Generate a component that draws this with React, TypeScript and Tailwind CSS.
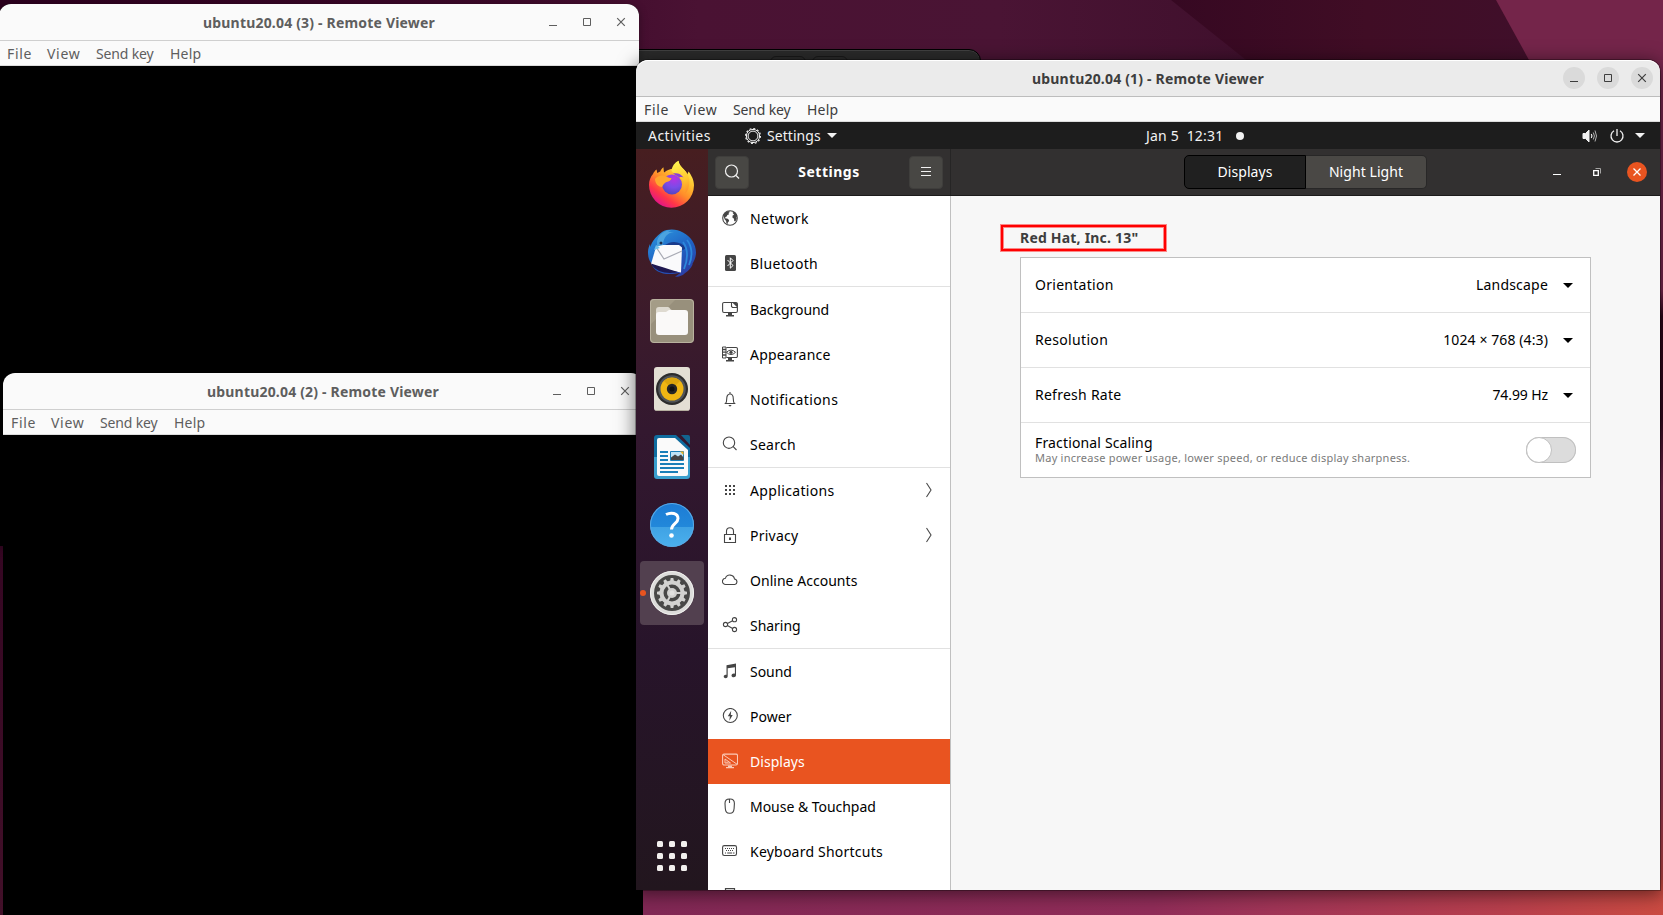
import type { ReactNode } from "react";

const FONT = "font-['Noto_Sans','Open_Sans',sans-serif]";

function Wallpaper() {
  return (
    <svg className="absolute inset-0" width="1663" height="915" viewBox="0 0 1663 915">
      <defs>
        <linearGradient id="wallTop" x1="0" x2="1" y1="0" y2="0">
          <stop offset="0" stopColor="#2c001e" />
          <stop offset="0.3" stopColor="#3c0829" />
          <stop offset="0.42" stopColor="#4a1233" />
          <stop offset="0.6" stopColor="#4a1434" />
          <stop offset="0.75" stopColor="#40102d" />
        </linearGradient>
        <linearGradient id="wallBottom" gradientUnits="userSpaceOnUse" x1="643" x2="1663" y1="0" y2="0">
          <stop offset="0" stopColor="#822855" />
          <stop offset="0.5" stopColor="#912d59" />
          <stop offset="0.62" stopColor="#a13557" />
          <stop offset="0.84" stopColor="#b83f4d" />
          <stop offset="1" stopColor="#cb4b42" />
        </linearGradient>
        <linearGradient id="wallLeft" x1="0" x2="0" y1="0" y2="1">
          <stop offset="0" stopColor="#2c001e" />
          <stop offset="1" stopColor="#421029" />
        </linearGradient>
        <linearGradient id="wallDark" gradientUnits="userSpaceOnUse" x1="1168" x2="1529" y1="0" y2="0">
          <stop offset="0" stopColor="#360822" />
          <stop offset="0.55" stopColor="#400d25" />
          <stop offset="1" stopColor="#400f2a" />
        </linearGradient>
        <linearGradient id="wallRight" x1="0" x2="0" y1="0" y2="1">
          <stop offset="0" stopColor="#7b2950" />
          <stop offset="0.27" stopColor="#7b2950" />
          <stop offset="0.3" stopColor="#2d0719" />
          <stop offset="0.42" stopColor="#35091f" />
          <stop offset="0.5" stopColor="#7b2950" />
          <stop offset="0.85" stopColor="#a03a55" />
          <stop offset="1" stopColor="#cb4b42" />
        </linearGradient>
      </defs>
      <rect width="1663" height="300" fill="url(#wallTop)" />
      <rect y="300" width="10" height="615" fill="url(#wallLeft)" />
      <path d="M1171 0H1663V200H1421z" fill="url(#wallDark)" />
      <path d="M1496 0H1663V300H1661z" fill="#74254a" />
      <rect x="1655" width="8" y="60" height="855" fill="url(#wallRight)" />
      <rect x="640" y="880" width="1023" height="35" fill="url(#wallBottom)" />
    </svg>
  );
}

function WindowButton({ active, children }: { active: boolean; children: ReactNode }) {
  return (
    <div className={`flex size-[22px] items-center justify-center rounded-full ${active ? "bg-[#dadada] text-[#3d3d3d]" : "text-[#5e5e5e]"}`}>
      <svg width="10" height="10" viewBox="0 0 10 10" fill="none" stroke="currentColor">
        {children}
      </svg>
    </div>
  );
}

function TitleBar({ title, active }: { title: string; active: boolean }) {
  return (
    <div
      className={`relative flex h-[37px] shrink-0 items-center justify-end gap-3 rounded-t-xl border-b pr-[7px] ${
        active ? "border-[#bdbdbd] bg-[#ebebeb] text-[#3d3d3d] shadow-[inset_0_1px_0_#fff]" : "border-[#cfcfcf] bg-[#fafafa] text-[#5e5e5e]"
      }`}
    >
      <div className="absolute inset-x-0 top-[9px] text-center text-[14px] leading-[19px] font-bold tracking-[0.19px]">{title}</div>
      <WindowButton active={active}>
        <path d="M1 8.5h8" />
      </WindowButton>
      <WindowButton active={active}>
        <path d="M1.5 1.5h7v7h-7z" />
      </WindowButton>
      <WindowButton active={active}>
        <path d="M1.2 1.2l7.6 7.6M8.8 1.2L1.2 8.8" strokeWidth="1.2" />
      </WindowButton>
    </div>
  );
}

function MenuBar({ active }: { active: boolean }) {
  return (
    <div className={`flex h-[25px] shrink-0 items-center border-b border-[#dcdcdc] bg-[#fafafa] pl-2 text-[14px] leading-[19px] ${active ? "text-[#3d3d3d]" : "text-[#5e5e5e]"}`}>
      <span className="w-[40px] tracking-[0.7px]">File</span>
      <span className="w-[49px] tracking-[0.7px]">View</span>
      <span className="w-[74px] whitespace-nowrap tracking-[-0.15px]">Send key</span>
      <span className="tracking-[0.2px]">Help</span>
    </div>
  );
}

const S = { fill: "none", stroke: "currentColor" } as const;

const icons: Record<string, ReactNode> = {
  network: (
    <>
      <circle cx="8" cy="8" r="7.3" {...S} strokeWidth="1.1" />
      <path d="M1.600 4.800C2.800 2.600 4.800 1.200 7.200.9l.6 1.200-1.300.8.6 1.300-1.700.8-1 1.700-1.200.4.300 1.300 1.700.1 1.900 1.500-.3 1.500-1 1.100-.3 1.700-1.100-1-.3-2.300-1.500-1.700-.7-2zM10.500 2.700l1.700-1c1.700 1 2.700 2.500 3.100 4.300l-.9 1.200.4 1.600-1.500 2.700-1.100-.5-.2-2.300-1.600-1.100.2-2.200 1.500-.7z" />
    </>
  ),
  bluetooth: (
    <>
      <rect x="3" y="0" width="11" height="16" rx="1.500" />
      <path d="M5.500 5l5.500 5.500-2.700 2.700V2.800L11 5.500 5.500 11" fill="none" stroke="#fff" strokeWidth="1" />
    </>
  ),
  background: (
    <>
      <path d="M9.500 1.500H2a1.400 1.400 0 0 0-1.400 1.400v7.200A1.400 1.400 0 0 0 2 11.500h12a1.400 1.400 0 0 0 1.400-1.400V2.900A1.400 1.400 0 0 0 14 1.500H9.500v4l1 1h4.700" {...S} strokeWidth="1.1" />
      <path d="M10 1.200h4L15.500 3v3.500zM6 12h4v2h2v1.500H4V14h2z" />
    </>
  ),
  appearance: (
    <>
      <path d="M4.500 1.500H14.200a1.200 1.200 0 0 1 1.200 1.200v7.600a1.200 1.200 0 0 1-1.200 1.200H4.500" {...S} strokeWidth="1.1" />
      <path d="M4.500 6.300Q9 1.800 13.500 6.300Q9 10.800 4.500 6.300z" {...S} strokeWidth="1" />
      <circle cx="9" cy="6.300" r="1.600" />
      <path d="M.5 1h3.500v11H.5z" {...S} />
      <path d="M.5 3.500h3.500M.5 6.200h3.500M.5 9h3.500" {...S} strokeWidth="1.300" />
      <path d="M6 12h4v2h2v1.500H4V14h2z" />
    </>
  ),
  notifications: (
    <>
      <path d="M3.500 12.500c1-1 1.200-2 1.200-4.500 0-3 1-5 3.300-5s3.300 2 3.300 5c0 2.500.2 3.500 1.200 4.500zM8 1v2" {...S} strokeWidth="1.1" />
      <path d="M6.300 14h3.400L8 15.700z" />
    </>
  ),
  search: <path d="M7 1a5.700 5.700 0 1 1 0 11.400A5.700 5.700 0 0 1 7 1zM11.200 10.700l3.300 3.300" {...S} strokeWidth="1.1" />,
  applications: <path d="M3 3h2v2H3zM7 3h2v2H7zM11 3h2v2h-2zM3 7h2v2H3zM7 7h2v2H7zM11 7h2v2h-2zM3 11h2v2H3zM7 11h2v2H7zM11 11h2v2h-2z" />,
  privacy: (
    <>
      <path d="M2.500 7.500h11v8h-11zM4.500 7.500V4.200a3.500 3.500 0 0 1 7 0v3.300" {...S} strokeWidth="1.1" />
      <path d="M7 10.500h2v2.500H7z" />
    </>
  ),
  cloud: <path d="M3.700 12.500a3.100 3.100 0 0 1-.3-6.200A4.700 4.700 0 0 1 12.500 7a2.800 2.800 0 0 1 .3 5.500z" {...S} strokeWidth="1.1" />,
  sharing: (
    <g {...S} strokeWidth="1.1">
      <circle cx="3.500" cy="7.500" r="2.100" />
      <circle cx="12.500" cy="2.700" r="2.100" />
      <circle cx="12.500" cy="12.500" r="2.100" />
      <path d="M5.400 6.500l5.200-2.800M5.400 8.500l5.200 3" />
    </g>
  ),
  sound: (
    <path d="M4.500 2.300L14 .5v11.700c0 1.200-1 2-2.300 2S9.500 13.500 9.500 12.400s1.100-1.900 2.300-1.900c.4 0 .8.1 1.100.3V4.300l-7.200 1v7.900c0 1.200-1 2-2 2s-2-.7-2-1.700 1-1.800 2-1.800c.3 0 .6 0 .8.1z" />
  ),
  power: (
    <>
      <circle cx="8.300" cy="7.500" r="7" {...S} strokeWidth="1.1" />
      <path d="M9.200 2.700L5.800 8.200h2.100L7.300 12.700l3.400-5.700H8.800z" />
    </>
  ),
  displays: (
    <>
      <rect x="0.600" y="1.100" width="14.900" height="10.900" rx="1.500" {...S} strokeWidth="1.1" />
      <path d="M1 1.600l14 9.600M3 6v4h5.500zM5 8.500v1.400" {...S} />
      <path d="M6 12.500h4V14h2v1.200H4V14h2z" />
    </>
  ),
  mouse: <path d="M7.300 1h.8c3 0 4.300 1.800 4.300 4.500l-.3 5c-.2 3-1.700 4.700-4 4.700h-.8c-2.300 0-3.800-1.700-4-4.700l-.3-5C3 2.800 4.300 1 7.300 1zM7.500 1v4" {...S} strokeWidth="1.1" />,
  keyboard: (
    <>
      <rect x="0.600" y="2.600" width="13.900" height="9.900" rx="1.700" {...S} strokeWidth="1.1" />
      <path d="M3 5.500h10M4 7.500h8" {...S} strokeDasharray="1 1" />
      <path d="M3 10h1M5.200 10h5M11 10h1.500" {...S} />
    </>
  ),
  printer: <path d="M3.500 16V.600h9V16" {...S} strokeWidth="1.200" />,
};

type Item = { icon: string; label: string; track: string; chevron?: boolean; active?: boolean };

const groups: Item[][] = [
  [
    { icon: "network", label: "Network", track: "tracking-[0.36px]" },
    { icon: "bluetooth", label: "Bluetooth", track: "tracking-[0.35px]" },
  ],
  [
    { icon: "background", label: "Background", track: "tracking-[-0.05px]" },
    { icon: "appearance", label: "Appearance", track: "tracking-[0.2px]" },
    { icon: "notifications", label: "Notifications", track: "tracking-[0.38px]" },
    { icon: "search", label: "Search", track: "tracking-[0.25px]" },
  ],
  [
    { icon: "applications", label: "Applications", track: "tracking-[0.35px]", chevron: true },
    { icon: "privacy", label: "Privacy", track: "tracking-[0.24px]", chevron: true },
    { icon: "cloud", label: "Online Accounts", track: "tracking-[0.03px]" },
    { icon: "sharing", label: "Sharing", track: "tracking-[-0.04px]" },
  ],
  [
    { icon: "sound", label: "Sound", track: "tracking-[-0.05px]" },
    { icon: "power", label: "Power", track: "tracking-[0.05px]" },
    { icon: "displays", label: "Displays", track: "tracking-[0.04px]", active: true },
    { icon: "mouse", label: "Mouse & Touchpad", track: "tracking-[-0.03px]" },
    { icon: "keyboard", label: "Keyboard Shortcuts", track: "tracking-[0.22px]" },
    { icon: "printer", label: "", track: "" },
  ],
];

function SidebarRow({ item }: { item: Item }) {
  return (
    <div className={`flex h-[45px] shrink-0 items-start pt-[14px] pr-[17px] pl-[14px] ${item.active ? "bg-[#e95420] text-white" : "text-black"}`}>
      <svg width="16" height="16" viewBox="0 0 16 16" fill="currentColor" className={item.active ? "text-[#fbc9b6]" : "text-[#454545]"}>
        {icons[item.icon]}
      </svg>
      <span className={`-mt-px ml-3 flex-1 text-[14px] leading-[19px] whitespace-nowrap ${item.track}`}>{item.label}</span>
      {item.chevron && (
        <svg width="8" height="16" viewBox="0 0 8 16" fill="none" stroke="#4a4a4a" strokeWidth="1.1">
          <path d="M1.500 1l4.500 7-4.500 7" />
        </svg>
      )}
    </div>
  );
}

function Firefox() {
  return (
    <svg width="48" height="48" viewBox="0 0 48 48" className="-mt-[3px]">
      <defs>
        <linearGradient id="ffBody" x1="0.85" y1="0.1" x2="0.25" y2="0.95">
          <stop offset="0" stopColor="#fff44f" />
          <stop offset="0.3" stopColor="#ffbd2e" />
          <stop offset="0.55" stopColor="#ff8a2a" />
          <stop offset="0.8" stopColor="#ff3647" />
          <stop offset="1" stopColor="#e31587" />
        </linearGradient>
        <radialGradient id="ffGlobe" cx="0.6" cy="0.2" r="0.9">
          <stop offset="0" stopColor="#b833e1" />
          <stop offset="0.5" stopColor="#7a4be8" />
          <stop offset="1" stopColor="#4a43b5" />
        </radialGradient>
        <linearGradient id="ffTail" x1="0.4" y1="0" x2="0.6" y2="1">
          <stop offset="0" stopColor="#fff44f" />
          <stop offset="0.6" stopColor="#ffc62f" />
          <stop offset="1" stopColor="#ff8f2a" />
        </linearGradient>
      </defs>
      <path d="M5 14c1-2 2-3.500 3.600-4.500l.6 3.500 3-1.500c.8-2 1.500-3 3.200-4.300l.6 5.300c4-3 7-4 10-3.700 1.300-4 2.500-6 4.500-8 .5 4 2.800 6 5.500 8.700 1.500 1.500 2.500 3 3.200 5l1.400-3c2.500 3.500 5.400 8 5.400 13.800A22.500 22.500 0 0 1 1 25c0-4.500 1.500-8 4-11z" fill="url(#ffBody)" />
      <path d="M23.500 11c.5-5 3.500-8.500 7-10.200.5 4 2.800 6.200 5.500 8.900 7 6 7 18 1 24.300 1-5 0-11-3-15S26 14 23.500 11z" fill="url(#ffTail)" />
      <circle cx="24" cy="24.500" r="10" fill="url(#ffGlobe)" />
      <path d="M7 19c2-2.500 5-4 8.500-3.500 2.500.3 4 2.500 8 2.500-.3 2.500-2.500 3.200-5 4-2 .7-2.800 2-4.500 5-3 0-7-3-7-8z" fill="#ffa72e" />
      <path d="M25 13.500c4-1 8 0 10.500 4-2-.6-3-.6-4 0z" fill="#8a3fd6" />
    </svg>
  );
}

function Thunderbird() {
  return (
    <svg width="50" height="50" viewBox="0 0 50 50">
      <defs>
        <linearGradient id="tbBody" x1="0.2" y1="0" x2="0.8" y2="1">
          <stop offset="0" stopColor="#2b93dc" />
          <stop offset="0.5" stopColor="#1f62c4" />
          <stop offset="1" stopColor="#2d3aa0" />
        </linearGradient>
      </defs>
      <path d="M15 4c6-3.500 15-3 21 .5 8 4 13 12 13 20 0 5-2 9-4 12l1-1c-2 6-7 9-10 11l2-1c-3 2.500-7 3.500-10 3.300l6-4.300C20 48 8 46 4 35 2 32 1 29 1 24c0-3 1-6 2-8l.5 3C5 13 9 9 12 6.500z" fill="url(#tbBody)" />
      <path d="M10 13c2-7 8-11 14-11l-3 2h6c-7 1-10 5-11 12-1 4-3 6-6 7z" fill="#4ba3df" />
      <path d="M17 18c7-6 16-5 22 2l-3 2z" fill="#183a8c" />
      <path d="M9 19l7-2h16l3 2.500-1 25C23 43 13 40 4 36z" fill="#fafafc" />
      <path d="M9 19l8 12 18-8" fill="none" stroke="#a9abb5" strokeWidth="1.200" />
      <path d="M4 35.500c8 2.500 17 5.500 27 8.500-8 2-22 1.500-27-8.500z" fill="#1f1850" />
      <path d="M40 12c5 6 6 16 2 25M36 14c5 7 5 17 1 27" fill="none" stroke="#2d88dc" strokeWidth="1.800" />
      <circle cx="14" cy="15" r="1.500" fill="#1b2b4f" />
      <path d="M9 17l-2 5 6-2z" fill="#6fc0ea" />
    </svg>
  );
}

function Files() {
  return (
    <svg width="46" height="46" viewBox="0 0 46 46">
      <rect x="1" y="1" width="44" height="44" rx="4" fill="#98907c" />
      <path d="M5 1h22L1 27V5a4 4 0 0 1 4-4z" fill="#a49c87" />
      <rect x="1.500" y="1.500" width="43" height="43" rx="3.500" fill="none" stroke="#b9b29f" />
      <path d="M7 12a3 3 0 0 1 3-3h9c2 0 2 3 4 3h13v6H7z" fill="#dedad0" />
      <path d="M7 17a3 3 0 0 1 3-3h7l3-2h16a3 3 0 0 1 3 3v19a3 3 0 0 1-3 3H10a3 3 0 0 1-3-3z" fill="#faf9f8" />
    </svg>
  );
}

function Speaker() {
  return (
    <svg width="46" height="46" viewBox="0 0 46 46">
      <rect x="5" y="1" width="36" height="44" rx="3" fill="#e3dfd4" />
      <path d="M7 44.500h32" stroke="#b5ae9f" />
      <circle cx="23" cy="23" r="16" fill="#2c2c2c" />
      <circle cx="23" cy="23" r="13.800" fill="#505458" />
      <circle cx="23" cy="23" r="11.500" fill="#f0b613" />
      <path d="M15 15a11.500 11.500 0 0 1 16 0l-8 8z" fill="#dca50c" />
      <circle cx="23" cy="23" r="5.200" fill="#262626" />
      <circle cx="23" cy="23" r="2.500" fill="#111" />
    </svg>
  );
}

function Writer() {
  return (
    <svg width="46" height="46" viewBox="0 0 46 46">
      <path d="M5 4a3 3 0 0 1 3-3h19l14 13v9H5z" fill="#0f6c9f" />
      <path d="M5 23h36v19a3 3 0 0 1-3 3H8a3 3 0 0 1-3-3z" fill="#3a9fcd" />
      <path d="M32 1h7a2 2 0 0 1 2 2v8z" fill="#12648f" />
      <path d="M8 6a2 2 0 0 1 2-2h16l13 12v24a2 2 0 0 1-2 2H10a2 2 0 0 1-2-2z" fill="#fafafa" />
      <path d="M11 18h8M11 22h8M11 26h8M11 30h24M11 34h24M11 38h18" stroke="#1a7fb8" strokeWidth="2" />
      <path d="M21.500 17.500h13v9h-13z" fill="#bfe3f5" stroke="#1a7fb8" />
      <path d="M22 26v-2.500l4-3 3 2 3-2 2.500 3V26z" fill="#444" />
      <path d="M31 17.500h3.500V21z" fill="#f3b61f" />
    </svg>
  );
}

function Help() {
  return (
    <div className="flex size-[44px] items-center justify-center rounded-full bg-[linear-gradient(#1c7cd5_0%,#2288da_54%,#3fa2e4_54%,#4bb0ee_100%)] shadow-[inset_0_0_0_1px_#59a9e5]">
      <svg width="20" height="30" viewBox="0 0 20 30">
        <path d="M4 4.500c5-2.500 12-1.500 12 4 0 5-6.500 5.500-6.500 11" fill="none" stroke="#fff" strokeWidth="3" />
        <circle cx="9.500" cy="25.500" r="2.300" fill="#fff" />
      </svg>
    </div>
  );
}

const TEETH = [0, 30, 60, 90, 120, 150, 180, 210, 240, 270, 300, 330];

function SettingsGear() {
  return (
    <svg width="46" height="46" viewBox="0 0 46 46">
      <circle cx="23" cy="23" r="22" fill="#dcdcda" />
      <circle cx="23" cy="23" r="21.500" fill="none" stroke="#f1f1ef" />
      <circle cx="23" cy="23" r="18" fill="#484847" />
      <circle cx="23" cy="23" r="10.500" fill="none" stroke="#d2d2d0" strokeWidth="4" />
      {TEETH.map((a) => (
        <path key={a} d="M21 11.500l.7-3.500h2.600l.7 3.500z" fill="#d2d2d0" transform={`rotate(${a} 23 23)`} />
      ))}
      <circle cx="23" cy="23" r="5" fill="#d2d2d0" />
      <path d="M23 23h10M23 23l-5-8.700M23 23l-5 8.700" stroke="#d2d2d0" strokeWidth="2" />
      <circle cx="23" cy="23" r="2.500" fill="#e2e2e0" />
    </svg>
  );
}

function Dock() {
  return (
    <div className="flex w-[72px] shrink-0 flex-col items-center gap-1 bg-[linear-gradient(#471e20_0%,#3c1b2b_22%,#33182f_38%,#27142a_68%,#22161e_100%)] pt-1">
      {[<Firefox key="f" />, <Thunderbird key="t" />, <Files key="n" />, <Speaker key="r" />, <Writer key="w" />, <Help key="h" />].map((icon, i) => (
        <div key={i} className="flex size-16 items-center justify-center">
          {icon}
        </div>
      ))}
      <div className="relative flex size-16 items-center justify-center rounded bg-[#52404f]">
        <SettingsGear />
        <div className="absolute top-[29px] left-0 size-[6px] rounded-full bg-[#e95420]" />
      </div>
      <div className="mt-auto mb-[19px] grid grid-cols-3 gap-[6px]">
        {TEETH.slice(0, 9).map((k) => (
          <div key={k} className="size-[6px] rounded-[1.5px] bg-[#f2f0ee]" />
        ))}
      </div>
    </div>
  );
}

function Caret({ className }: { className: string }) {
  return (
    <svg width="10" height="5" viewBox="0 0 10 5" fill="currentColor" className={className}>
      <path d="M0 0h10L5 5z" />
    </svg>
  );
}

function GuestTopBar() {
  return (
    <div className="relative flex h-[27px] shrink-0 items-center bg-[#1d1d1d] text-[14px] leading-[19px] text-[#f2f2f2]">
      <span className="ml-3 w-[97px] tracking-[0.45px]">Activities</span>
      <svg width="16" height="16" viewBox="0 0 16 16" fill="none" stroke="currentColor">
        <circle cx="8" cy="8" r="4.900" strokeWidth="1" />
        <circle cx="8" cy="8" r="6.600" strokeWidth="1" />
        <circle cx="8" cy="8" r="7.400" strokeWidth="1.200" strokeDasharray="1.940 1.940" />
      </svg>
      <span className="ml-[6px] w-[60px] tracking-[0.06px]">Settings</span>
      <Caret className="" />
      <div className="ml-auto flex items-center pr-[15px]">
        <svg width="16" height="14" viewBox="0 0 16 14" fill="none" stroke="currentColor">
          <path d="M1 4.500h2.500L7 1v12L3.500 9.500H1z" fill="currentColor" />
          <path d="M9.300 5q1.300 2 0 4" strokeWidth="1.200" />
          <path d="M11.300 3.500q2.200 3.500 0 7M13 1.500q3 5.500 0 11" strokeWidth="1" opacity="0.700" />
        </svg>
        <svg width="16" height="16" viewBox="0 0 16 16" fill="none" stroke="currentColor" strokeWidth="1.300" className="ml-[11px]">
          <path d="M5 2.800a6 6 0 1 0 6 0M8 1v7" />
        </svg>
        <Caret className="ml-[10px]" />
      </div>
      <div className="absolute inset-y-0 left-[510px] flex items-center">
        <span className="w-[90px] pb-px tracking-[0.2px] whitespace-pre">Jan 5  12:31</span>
        <span className="size-2 rounded-full bg-[#f2f2f2]" />
      </div>
    </div>
  );
}

function HeaderBar() {
  return (
    <div className="flex h-[47px] shrink-0 border-b border-[#1c1b1b] bg-[#323030] text-[14px] leading-[19px] text-white">
      <div className="flex w-[243px] shrink-0 items-center justify-between border-r border-[#262525] px-[7px]">
        <div className="flex h-[33px] w-[34px] items-center justify-center rounded border border-[#3f3e3c] bg-[#484744] pr-px">
          <svg width="16" height="16" viewBox="0 0 16 16" fill="none" stroke="#f2f2f2" strokeWidth="1.200">
            <circle cx="7.500" cy="7" r="6" />
            <path d="M12 11.500l3 3" />
          </svg>
        </div>
        <span className="-mt-[2px] font-bold tracking-[0.5px]">Settings</span>
        <div className="flex h-[33px] w-[34px] items-center justify-center rounded border border-[#3f3e3c] bg-[#484744]">
          <svg width="10" height="10" viewBox="0 0 10 10" stroke="#f2f2f2">
            <path d="M0 .5h10M0 4.500h10M0 8.500h10" />
          </svg>
        </div>
      </div>
      <div className="flex flex-1 items-center">
        <div className="ml-[233px] flex h-[34px] w-[243px] *:pb-[2px]">
          <div className="flex w-[122px] items-center justify-center rounded-l-[5px] border border-black bg-[#202020] tracking-[0.04px]">Displays</div>
          <div className="flex w-[121px] items-center justify-center rounded-r-[5px] border border-l-0 border-[#282727] bg-[#4a4845] tracking-[0.06px]">Night Light</div>
        </div>
        <div className="ml-auto flex items-center pr-[13px]">
          <svg width="8" height="8" viewBox="0 0 8 8" stroke="#fff">
            <path d="M0 6.500h8" />
          </svg>
          <svg width="8" height="8" viewBox="0 0 8 8" fill="none" className="ml-[32px]">
            <path d="M2.500 .5h5v5" stroke="#a5a4a3" />
            <path d="M.7 2.700h4.600v4.600H.7z" stroke="#fff" strokeWidth="1.300" />
          </svg>
          <div className="ml-[26px] flex size-5 items-center justify-center rounded-full bg-[#e95420]">
            <svg width="8" height="8" viewBox="0 0 8 8" stroke="#fff" strokeWidth="1.300">
              <path d="M.5 .5l7 7M7.500 .5l-7 7" />
            </svg>
          </div>
        </div>
      </div>
    </div>
  );
}

const settings = [
  { label: "Orientation", labelTrack: "tracking-[0.28px]", value: "Landscape", valueTrack: "tracking-[0.2px]" },
  { label: "Resolution", labelTrack: "tracking-[0.33px]", value: "1024 × 768 (4:3)", valueTrack: "tracking-[0.1px]" },
  { label: "Refresh Rate", labelTrack: "tracking-[0.26px]", value: "74.99 Hz", valueTrack: "tracking-[-0.1px]" },
];

function DisplayPanel() {
  return (
    <div className="flex flex-1 flex-col bg-[#f7f7f7] pt-[29px]">
      <div className="ml-[50px] flex h-[26px] w-[165px] items-center border-2 border-[#ff0000] pl-[17px] text-[14px] leading-[19px] font-bold tracking-[0.2px] text-[#3d3d3d] shadow-[0_0_0_1px_rgba(255,0,0,0.45),inset_0_0_0_1px_rgba(255,0,0,0.45)]">
        <span className="-mt-[2px]">Red Hat, Inc. 13"</span>
      </div>
      <div className="mt-[6px] ml-[69px] w-[571px] divide-y divide-[#e1e1e1] border border-[#c0c0c0] bg-white text-[14px] leading-[19px] text-black">
        {settings.map((s) => (
          <div key={s.label} className="flex h-[55px] items-center pr-[17px] pl-[14px]">
            <span className={`flex-1 pb-px ${s.labelTrack}`}>{s.label}</span>
            <span className={`pb-px ${s.valueTrack}`}>{s.value}</span>
            <Caret className="ml-[15px]" />
          </div>
        ))}
        <div className="flex h-[54px] items-center justify-between pr-[14px] pl-[14px]">
          <div className="pb-px">
            <div className="leading-[17px] tracking-[0.15px]">Fractional Scaling</div>
            <div className="text-[11px] leading-[14px] tracking-[0.24px] text-[#7a7a7a]">May increase power usage, lower speed, or reduce display sharpness.</div>
          </div>
          <div className="flex h-[26px] w-[50px] rounded-full bg-[#dcdcdc] shadow-[inset_0_0_0_1px_#c0c0c0]">
            <div className="size-[26px] rounded-full border border-[#c0c0c0] bg-white" />
          </div>
        </div>
      </div>
    </div>
  );
}

export default function App() {
  return (
    <div className={`relative h-[915px] w-[1663px] overflow-hidden bg-[#2c001e] ${FONT}`}>
      <Wallpaper />

      <div className="absolute top-[49px] left-[560px] flex h-[60px] w-[421px] items-start rounded-tr-xl border border-black bg-[#2b2b2b] pt-[6px] pl-[209px] shadow-[inset_0_1px_0_#414141]">
        <div className="h-8 w-[36px] rounded-md border border-[#191919]" />
        <div className="ml-[6px] h-8 w-[36px] rounded-md border border-[#191919]" />
      </div>

      <div className="absolute top-[4px] left-[-1px] flex h-[542px] w-[640px] flex-col rounded-t-xl bg-black shadow-[0_2px_8px_rgba(0,0,0,0.35)]">
        <TitleBar title="ubuntu20.04 (3) - Remote Viewer" active={false} />
        <MenuBar active={false} />
      </div>

      <div className="absolute top-[373px] left-[3px] flex h-[560px] w-[640px] flex-col rounded-t-xl bg-black">
        <TitleBar title="ubuntu20.04 (2) - Remote Viewer" active={false} />
        <MenuBar active={false} />
      </div>

      <div className="absolute top-[60px] left-[636px] flex h-[830px] w-[1024px] flex-col rounded-t-xl shadow-[0_3px_18px_2px_rgba(0,0,0,0.5),0_0_0_1px_rgba(0,0,0,0.3)]">
        <TitleBar title="ubuntu20.04 (1) - Remote Viewer" active />
        <MenuBar active />
        <GuestTopBar />
        <div className="flex min-h-0 flex-1">
          <Dock />
          <div className="flex min-w-0 flex-1 flex-col">
            <HeaderBar />
            <div className="flex min-h-0 flex-1">
              <div className="w-[243px] shrink-0 divide-y divide-[#e1e1e1] overflow-hidden border-r border-[#c0c0c0] bg-white">
                {groups.map((items, i) => (
                  <div key={i}>
                    {items.map((item) => (
                      <SidebarRow key={item.icon} item={item} />
                    ))}
                  </div>
                ))}
              </div>
              <DisplayPanel />
            </div>
          </div>
        </div>
      </div>
    </div>
  );
}
